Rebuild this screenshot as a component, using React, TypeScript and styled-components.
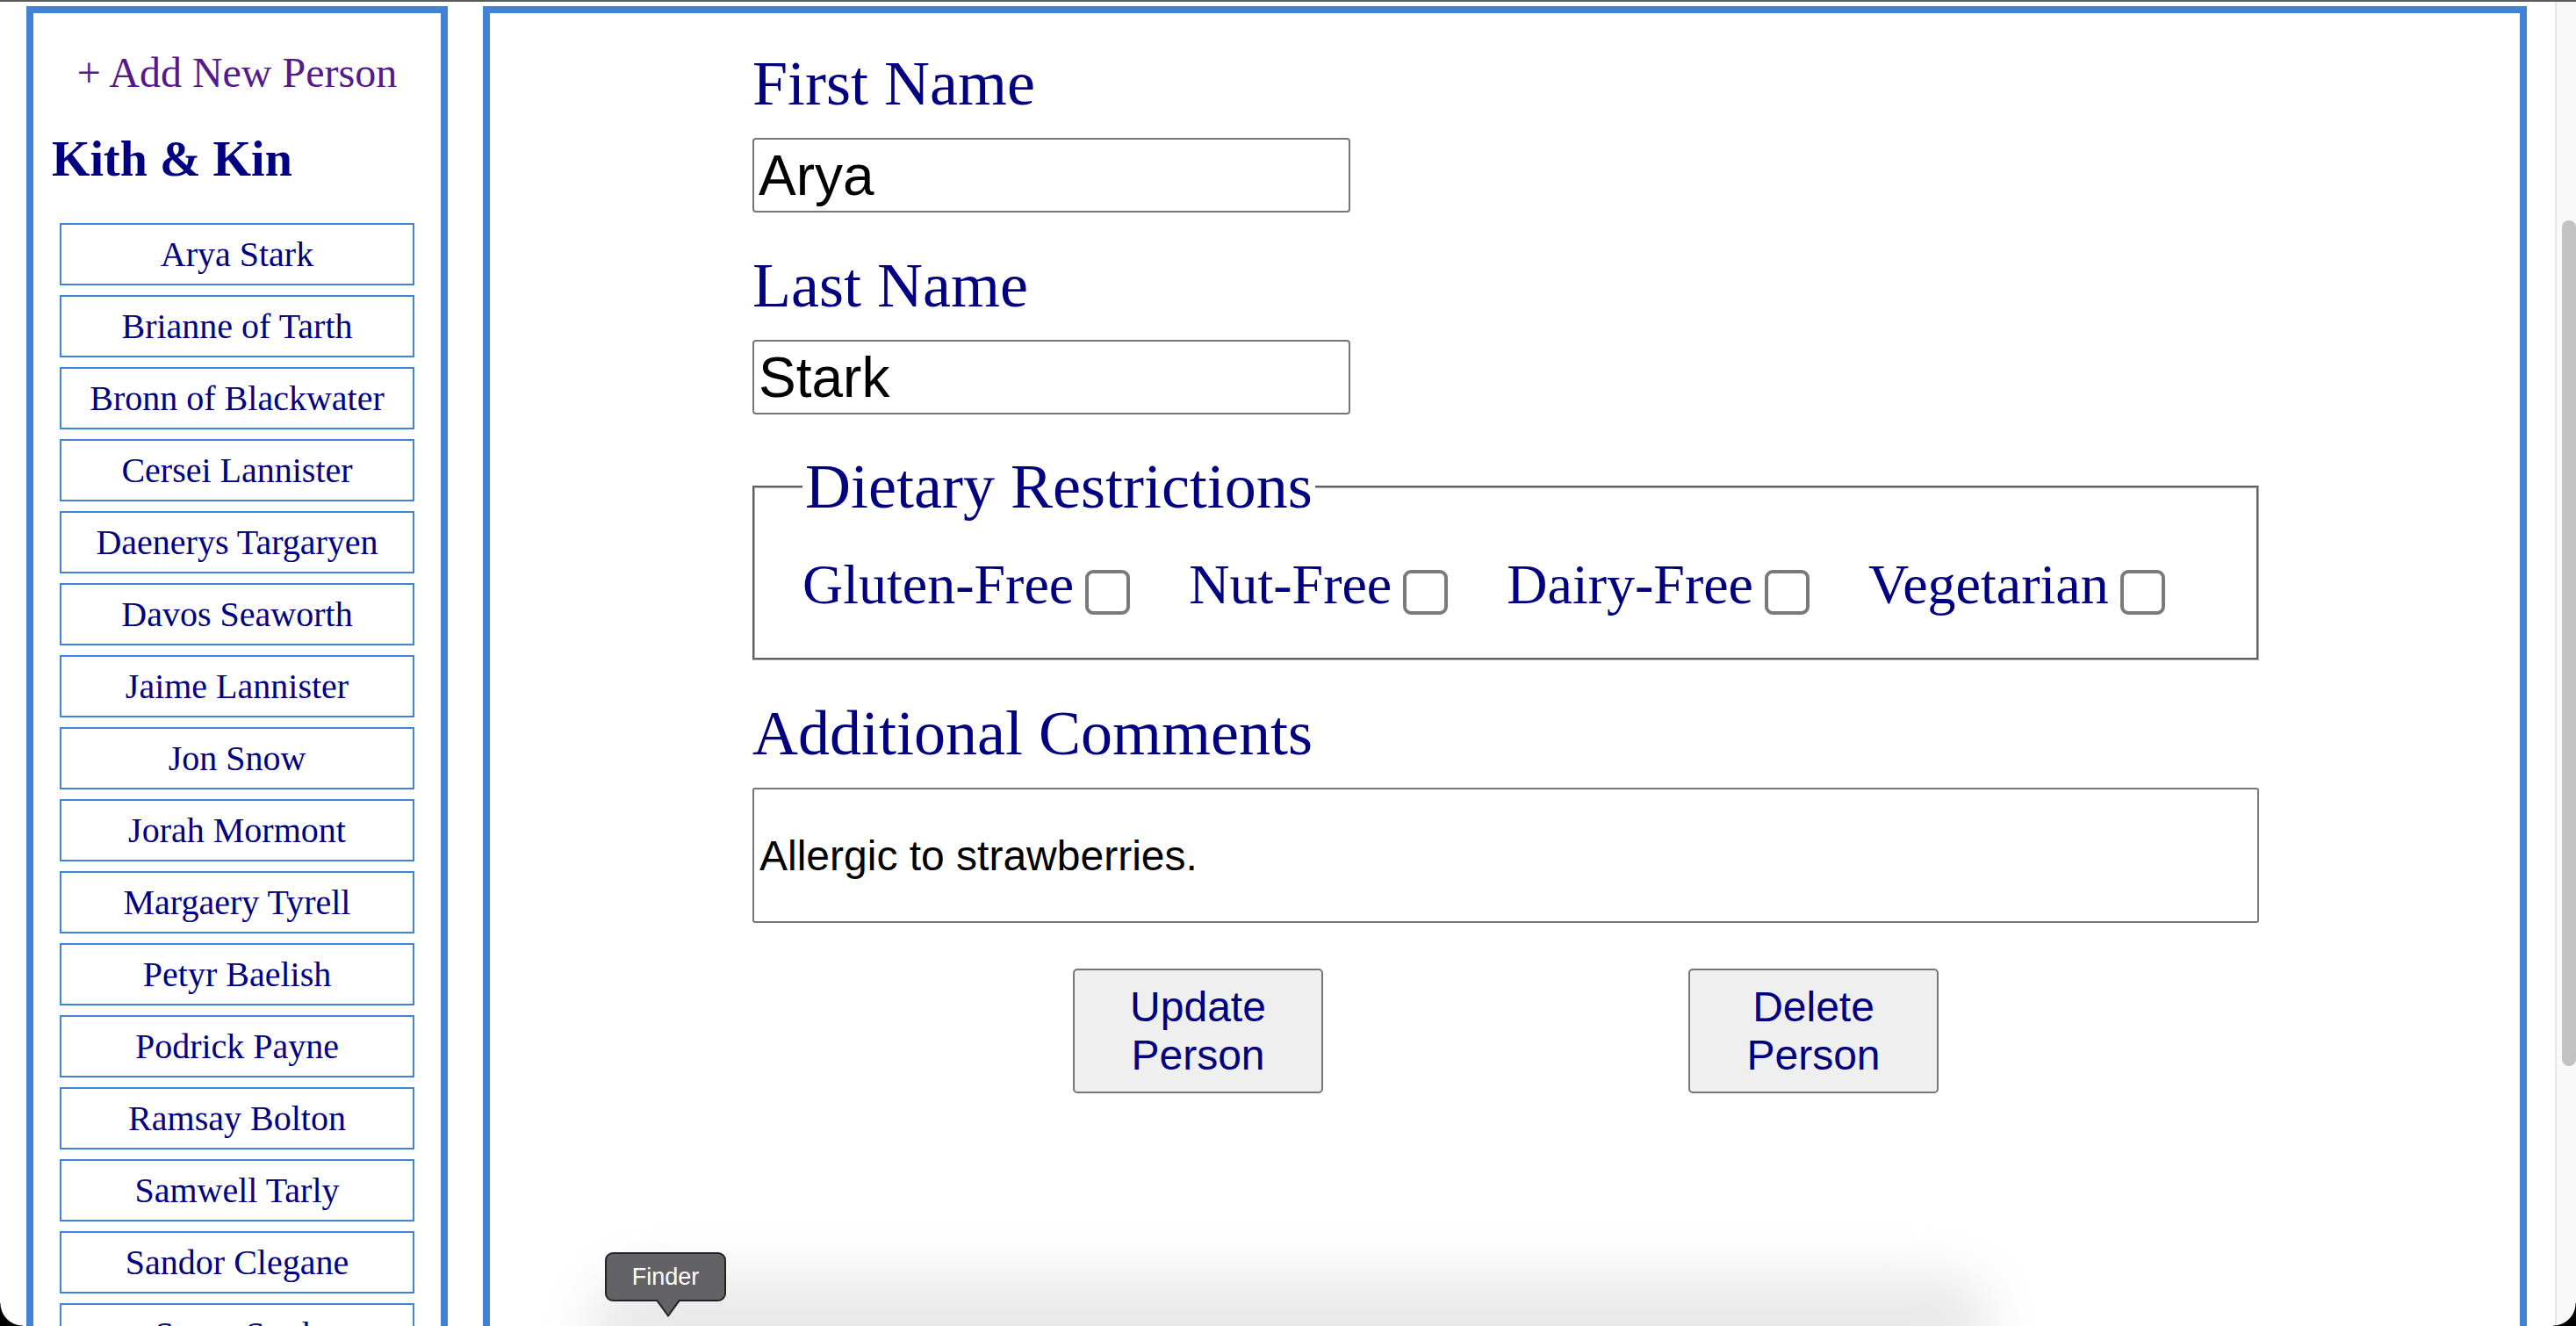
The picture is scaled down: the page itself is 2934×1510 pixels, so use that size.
import React from 'react';
import styled, { createGlobalStyle } from 'styled-components';

const GlobalStyle = createGlobalStyle`
    html, body {
        margin: 0;
        padding: 0;
        height: 100%;
        overflow: hidden;
        background: #ffffff;
    }

    #root {
        height: 100%;
    }
`;

const BLUE = '#4183d7';
const NAVY = '#000080';

const people = [
    'Arya Stark',
    'Brianne of Tarth',
    'Bronn of Blackwater',
    'Cersei Lannister',
    'Daenerys Targaryen',
    'Davos Seaworth',
    'Jaime Lannister',
    'Jon Snow',
    'Jorah Mormont',
    'Margaery Tyrell',
    'Petyr Baelish',
    'Podrick Payne',
    'Ramsay Bolton',
    'Samwell Tarly',
    'Sandor Clegane',
    'Sansa Stark',
    'Theon Greyjoy',
    'Tyrion Lannister',
];

const diets = ['Gluten-Free', 'Nut-Free', 'Dairy-Free', 'Vegetarian'];

const App: React.FC = () => {
    return (
        <Screen>
            <GlobalStyle />
            <TopEdge />
            <Row>
                <Sidebar>
                    <AddLink href="#">+ Add New Person</AddLink>
                    <SideTitle>Kith &amp; Kin</SideTitle>
                    <PersonList>
                        {people.map((name) => (
                            <PersonItem key={name}>{name}</PersonItem>
                        ))}
                    </PersonList>
                </Sidebar>

                <MainPanel>
                    <Form onSubmit={(e) => e.preventDefault()}>
                        <FieldLabel htmlFor="first">First Name</FieldLabel>
                        <NameInput id="first" defaultValue="Arya" />

                        <FieldLabel htmlFor="last" $gap={42}>Last Name</FieldLabel>
                        <NameInput id="last" defaultValue="Stark" />

                        <DietSet>
                            <DietLegend>Dietary Restrictions</DietLegend>
                            <DietRow>
                                {diets.map((d) => (
                                    <DietOption key={d}>
                                        {d}
                                        <Check type="checkbox" />
                                    </DietOption>
                                ))}
                            </DietRow>
                        </DietSet>

                        <FieldLabel htmlFor="comments" $gap={42}>Additional Comments</FieldLabel>
                        <CommentInput id="comments" defaultValue="Allergic to strawberries." />

                        <ButtonRow>
                            <ActionButton type="submit">Update Person</ActionButton>
                            <ActionButton type="button">Delete Person</ActionButton>
                        </ButtonRow>
                    </Form>
                </MainPanel>

                <ScrollGutter>
                    <ScrollThumb />
                </ScrollGutter>
            </Row>

            <DockGlow />
            <Tooltip>Finder</Tooltip>
            <Corner $side="left" />
            <Corner $side="right" />
        </Screen>
    );
};

export default App;

const Screen = styled.div`
    position: relative;
    height: 100vh;
    overflow: hidden;
    display: flex;
    flex-direction: column;
`;

const TopEdge = styled.div`
    height: 2px;
    flex-shrink: 0;
    background: #5a5a5a;
`;

const Row = styled.div`
    flex: 1;
    display: flex;
    align-items: flex-start;
    padding-left: 30px;
    overflow: hidden;
`;

const Sidebar = styled.aside`
    box-sizing: border-box;
    width: 480px;
    height: 1700px;
    margin-top: 5px;
    flex-shrink: 0;
    border: 8px solid ${BLUE};
    display: flex;
    flex-direction: column;
`;

const AddLink = styled.a`
    display: block;
    margin-top: 40px;
    text-align: center;
    font-family: "Liberation Serif", "Times New Roman", serif;
    font-size: 48px;
    line-height: normal;
    color: #551a8b;
    text-decoration: none;
`;

const SideTitle = styled.h2`
    margin: 39px 0 0;
    padding-left: 21px;
    font-family: "Liberation Serif", "Times New Roman", serif;
    font-size: 56px;
    font-weight: 700;
    line-height: normal;
    color: ${NAVY};
`;

const PersonList = styled.ul`
    list-style: none;
    margin: 41px 0 0;
    padding: 0 30px;
    display: flex;
    flex-direction: column;
    gap: 11px;
`;

const PersonItem = styled.li`
    box-sizing: border-box;
    height: 71px;
    border: 2px solid ${BLUE};
    display: flex;
    align-items: center;
    justify-content: center;
    font-family: "Liberation Serif", "Times New Roman", serif;
    font-size: 40px;
    color: ${NAVY};
    cursor: pointer;
`;

const MainPanel = styled.main`
    box-sizing: border-box;
    width: 2328px;
    height: 1700px;
    margin-left: 40px;
    margin-top: 5px;
    flex-shrink: 0;
    border: 8px solid ${BLUE};
    padding: 39px 0 0 299px;
`;

const Form = styled.form`
    width: 1716px;
    display: flex;
    flex-direction: column;
    align-items: flex-start;
`;

const FieldLabel = styled.label<{ $gap?: number }>`
    display: block;
    margin-top: ${(p) => p.$gap ?? 0}px;
    font-family: "Liberation Serif", "Times New Roman", serif;
    font-size: 72px;
    line-height: normal;
    color: ${NAVY};
`;

const NameInput = styled.input`
    box-sizing: border-box;
    width: 681px;
    height: 85px;
    margin-top: 20px;
    padding: 0 5px;
    border: 2px solid #767676;
    border-radius: 4px;
    font-family: "Liberation Sans", Arial, sans-serif;
    font-size: 64px;
    color: #000;
    background: #fff;
    outline: none;
`;

const DietSet = styled.fieldset`
    box-sizing: border-box;
    width: 1716px;
    margin: 41px 0 0;
    padding: 33px 20px 46px 54px;
    border: 3px groove #b4b4b4;
    min-inline-size: 0;
`;

const DietLegend = styled.legend`
    padding: 0 3px;
    font-family: "Liberation Serif", "Times New Roman", serif;
    font-size: 72px;
    line-height: normal;
    color: ${NAVY};
`;

const DietRow = styled.div`
    display: flex;
    align-items: center;
    gap: 67px;
`;

const DietOption = styled.label`
    display: flex;
    align-items: center;
    font-family: "Liberation Serif", "Times New Roman", serif;
    font-size: 64px;
    line-height: normal;
    color: ${NAVY};
`;

const Check = styled.input`
    appearance: none;
    box-sizing: border-box;
    width: 51px;
    height: 51px;
    margin: 16px 0 0 13px;
    border: 4px solid #7a7a7a;
    border-radius: 9px;
    background: #fff;
`;

const CommentInput = styled.input`
    box-sizing: border-box;
    width: 1716px;
    height: 154px;
    margin-top: 20px;
    padding: 0 6px;
    border: 2px solid #767676;
    border-radius: 3px;
    font-family: "Liberation Sans", Arial, sans-serif;
    font-size: 48px;
    color: #000;
    background: #fff;
    outline: none;
`;

const ButtonRow = styled.div`
    align-self: stretch;
    display: flex;
    justify-content: center;
    gap: 416px;
    margin-top: 52px;
`;

const ActionButton = styled.button`
    box-sizing: border-box;
    width: 285px;
    height: 142px;
    padding: 1px 6px;
    border: 2px solid #767676;
    border-radius: 5px;
    background: #efefef;
    font-family: "Liberation Sans", Arial, sans-serif;
    font-size: 48px;
    line-height: normal;
    color: ${NAVY};
`;

const ScrollGutter = styled.div`
    align-self: stretch;
    box-sizing: border-box;
    width: 24px;
    margin-left: 32px;
    flex-shrink: 0;
    background: #f9f9f9;
    border-left: 2px solid #e6e6e6;
    padding: 249px 0 0 6px;
`;

const ScrollThumb = styled.div`
    width: 16px;
    height: 963px;
    border-radius: 8px;
    background: #c2c2c2;
`;

/* macOS dock peeking in at the bottom of the screenshot */
const DockGlow = styled.div`
    position: absolute;
    left: 670px;
    bottom: -70px;
    width: 1600px;
    height: 130px;
    border-radius: 60px;
    background: rgba(215, 215, 215, 0.55);
    filter: blur(30px);
    pointer-events: none;
`;

const Tooltip = styled.div`
    position: absolute;
    left: 689px;
    top: 1426px;
    box-sizing: border-box;
    width: 138px;
    height: 56px;
    border: 2px solid #232323;
    border-radius: 9px;
    background: #636266;
    display: flex;
    align-items: center;
    justify-content: center;
    font-family: "Liberation Sans", Arial, sans-serif;
    font-size: 27px;
    color: #fff;

    &::after {
        content: '';
        position: absolute;
        left: 58px;
        top: 52px;
        border-left: 12px solid transparent;
        border-right: 12px solid transparent;
        border-top: 17px solid #636266;
    }

    &::before {
        content: '';
        position: absolute;
        left: 56px;
        top: 53px;
        border-left: 14px solid transparent;
        border-right: 14px solid transparent;
        border-top: 19px solid #232323;
    }
`;

const Corner = styled.div<{ $side: 'left' | 'right' }>`
    position: absolute;
    bottom: 0;
    ${(p) => (p.$side === 'left' ? 'left: 0;' : 'right: 0;')}
    width: 26px;
    height: 26px;
    background: ${(p) =>
        p.$side === 'left'
            ? 'radial-gradient(circle at 100% 0, transparent 25px, #000 26px)'
            : 'radial-gradient(circle at 0 0, transparent 25px, #000 26px)'};
`;
